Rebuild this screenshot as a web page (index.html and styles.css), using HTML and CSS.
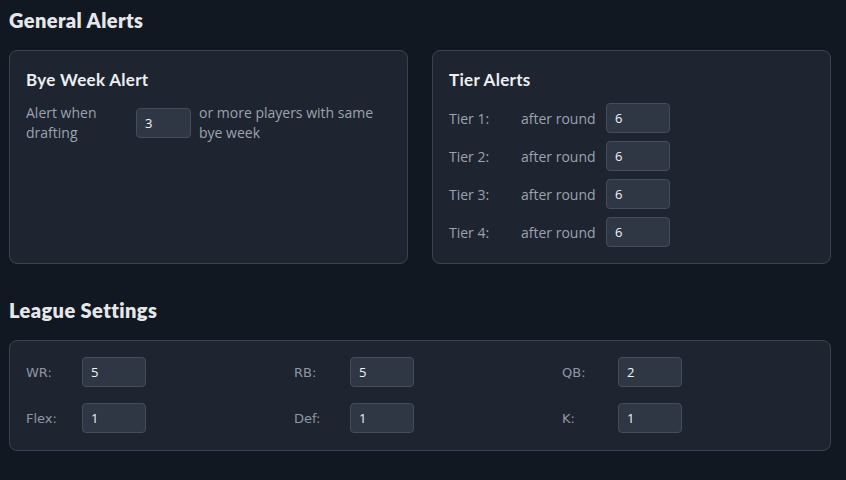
FILE: index.html
```html
<!DOCTYPE html>
<html lang="en">
<head>
<meta charset="utf-8">
<title>Settings</title>
<link rel="stylesheet" href="styles.css">
</head>
<body>
<main class="page">
  <h2 class="section-title">General Alerts</h2>
  <div class="alert-grid">
    <section class="card">
      <h3 class="card-title">Bye Week Alert</h3>
      <div class="bye-row">
        <span class="bye-label">Alert when drafting</span>
        <input class="field field-sm" type="text" value="3">
        <span class="bye-text">or more players with same bye week</span>
      </div>
    </section>
    <section class="card">
      <h3 class="card-title">Tier Alerts</h3>
      <div class="tier-list">
        <div class="tier-row"><span class="tier-label">Tier 1:</span><span class="tier-text">after round</span><input class="field" type="text" value="6"></div>
        <div class="tier-row"><span class="tier-label">Tier 2:</span><span class="tier-text">after round</span><input class="field" type="text" value="6"></div>
        <div class="tier-row"><span class="tier-label">Tier 3:</span><span class="tier-text">after round</span><input class="field" type="text" value="6"></div>
        <div class="tier-row"><span class="tier-label">Tier 4:</span><span class="tier-text">after round</span><input class="field" type="text" value="6"></div>
      </div>
    </section>
  </div>

  <h2 class="section-title league-title">League Settings</h2>
  <section class="card league-card">
    <div class="league-grid">
      <label class="league-item"><span class="league-label">WR:</span><input class="field league-field" type="text" value="5"></label>
      <label class="league-item"><span class="league-label">RB:</span><input class="field league-field" type="text" value="5"></label>
      <label class="league-item"><span class="league-label">QB:</span><input class="field league-field" type="text" value="2"></label>
      <label class="league-item"><span class="league-label">Flex:</span><input class="field league-field" type="text" value="1"></label>
      <label class="league-item"><span class="league-label">Def:</span><input class="field league-field" type="text" value="1"></label>
      <label class="league-item"><span class="league-label">K:</span><input class="field league-field" type="text" value="1"></label>
    </div>
  </section>
</main>
</body>
</html>
```

FILE: styles.css
```css
* { box-sizing: border-box; }

html, body {
  margin: 0;
  padding: 0;
  background: #111821;
}

body {
  font-family: "Open Sans", "Noto Sans", sans-serif;
  color: #9ca3af;
  width: 846px;
  height: 480px;
  overflow: hidden;
}

.page {
  width: 822px;
  margin-left: 9px;
  padding-top: 8px;
}

.section-title {
  margin: 0;
  font-family: Lato, "Noto Sans", sans-serif;
  font-size: 20px;
  line-height: 24px;
  font-weight: 800;
  color: #e5e7eb;
  letter-spacing: 0.4px;
}

.league-title {
  margin-top: 34px;
}

.alert-grid {
  display: grid;
  grid-template-columns: 1fr 1fr;
  gap: 24px;
  margin-top: 18px;
}

.card {
  background: #1e2430;
  border: 1px solid #3b4350;
  border-radius: 8px;
  padding: 16px;
}

.card-title {
  margin: 2px 0 0;
  font-family: Lato, "Noto Sans", sans-serif;
  font-size: 17px;
  line-height: 22px;
  font-weight: 700;
  color: #eceef2;
  letter-spacing: 0.3px;
}

.bye-row {
  display: flex;
  align-items: center;
  gap: 8px;
  margin-top: 12px;
  font-size: 14px;
  line-height: 20px;
}

.bye-label {
  width: 102px;
  flex: none;
}

.bye-text {
  flex: 1;
}

.field {
  width: 64px;
  height: 30px;
  background: #2f3744;
  border: 1px solid #454d5b;
  border-radius: 4px;
  color: #f1f3f6;
  font-family: "Open Sans", "Noto Sans", sans-serif;
  font-size: 13px;
  padding: 0 8px;
  outline: none;
}

.field-sm {
  width: 55px;
}

.tier-list {
  display: flex;
  flex-direction: column;
  gap: 8px;
  margin-top: 12px;
}

.tier-row {
  display: flex;
  align-items: center;
  font-size: 14px;
}

.tier-label {
  width: 72px;
  flex: none;
}

.tier-text {
  width: 85px;
  flex: none;
}

.league-card {
  margin-top: 18px;
  padding-bottom: 17px;
}

.league-grid {
  display: grid;
  grid-template-columns: repeat(3, 1fr);
  column-gap: 16px;
  row-gap: 16px;
}

.league-item {
  display: flex;
  align-items: center;
}

.league-label {
  width: 56px;
  flex: none;
  font-family: "DejaVu Sans", Verdana, sans-serif;
  font-size: 13px;
  color: #8f97a3;
}
```
